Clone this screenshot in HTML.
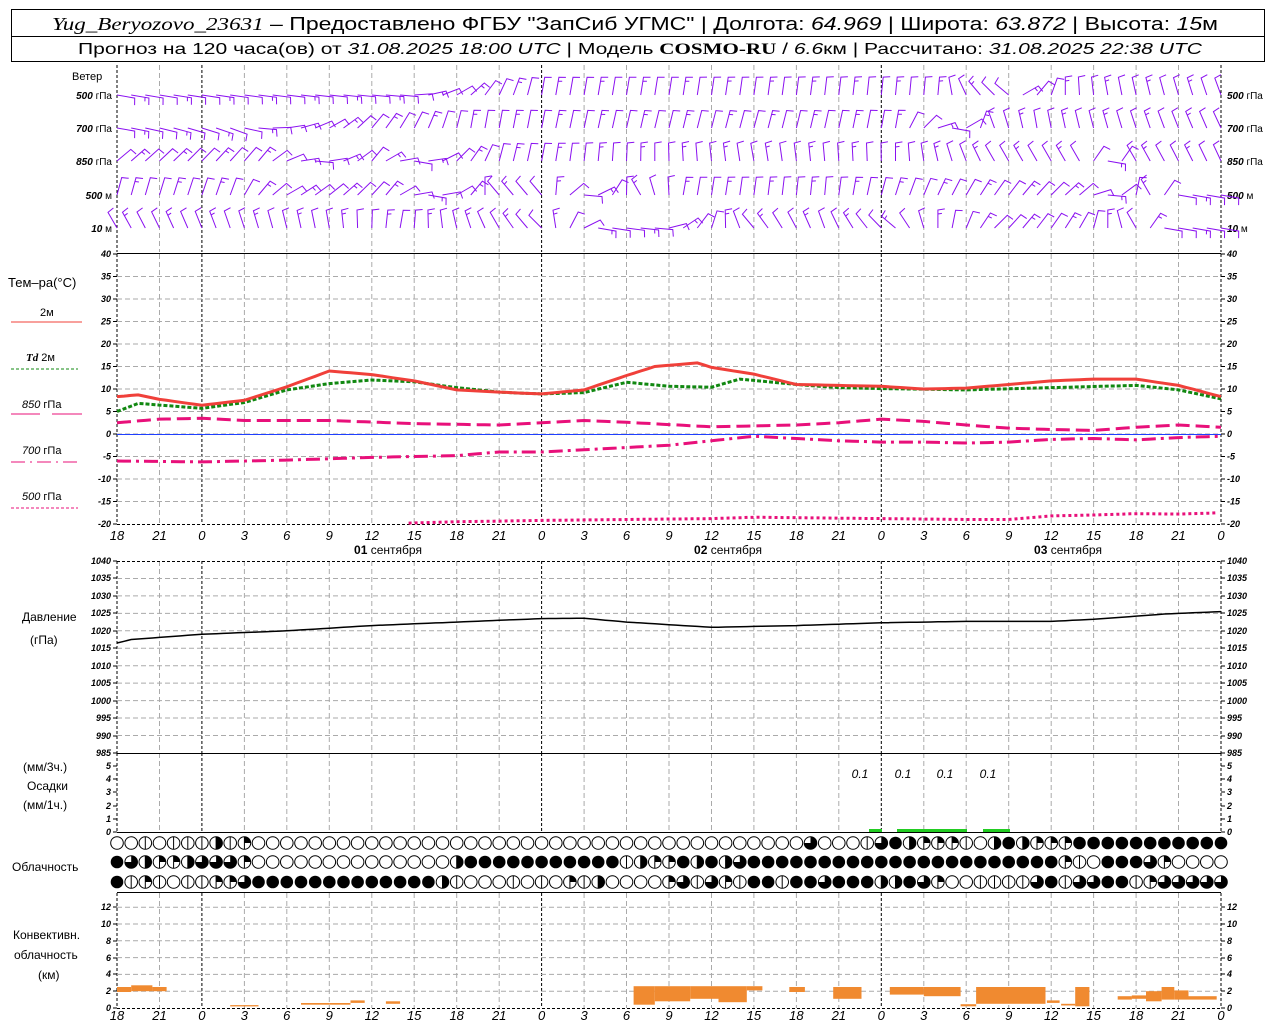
<!DOCTYPE html>
<html><head><meta charset="utf-8">
<style>
html,body{margin:0;padding:0;background:#fff;}
svg{display:block;font-family:"Liberation Sans","DejaVu Sans",sans-serif;}
</style></head>
<body>
<svg id="s" width="1280" height="1024" viewBox="0 0 1280 1024" xmlns="http://www.w3.org/2000/svg">
<rect width="1280" height="1024" fill="#fff"/>
<rect x="11.5" y="9.5" width="1253" height="52" fill="none" stroke="#000" stroke-width="1"/>
<line x1="11" y1="36.5" x2="1265" y2="36.5" stroke="#000"/>
<text x="52" y="30" font-size="18" textLength="1166" lengthAdjust="spacingAndGlyphs"><tspan font-style="italic" font-family="Liberation Serif,serif">Yug_Beryozovo_23631</tspan> – Предоставлено ФГБУ "ЗапСиб УГМС" | Долгота: <tspan font-style="italic">64.969</tspan> | Широта: <tspan font-style="italic">63.872</tspan> | Высота: <tspan font-style="italic">15</tspan>м</text>
<text x="78" y="54" font-size="16" textLength="1124" lengthAdjust="spacingAndGlyphs">Прогноз на 120 часа(ов) от <tspan font-style="italic">31.08.2025 18:00 UTC</tspan>  | Модель <tspan font-weight="bold" font-family="Liberation Serif,serif">COSMO-RU</tspan> / <tspan font-style="italic">6.6</tspan>км | Рассчитано: <tspan font-style="italic">31.08.2025 22:38 UTC</tspan></text>
<g font-size="11" fill="#000">
<text x="72" y="80">Ветер</text>
<text x="8" y="287" font-size="13">Тем–ра(°C)</text>
<text x="40" y="316">2м</text>
<text x="26" y="361"><tspan font-style="italic" font-weight="bold" font-family="Liberation Serif,serif">Td</tspan>  2м</text>
<text x="22" y="408"><tspan font-style="italic">850</tspan> гПа</text>
<text x="22" y="454"><tspan font-style="italic">700</tspan> гПа</text>
<text x="22" y="500"><tspan font-style="italic">500</tspan> гПа</text>
<text x="22" y="621" font-size="12">Давление</text>
<text x="30" y="644" font-size="12">(гПа)</text>
<text x="23" y="771" font-size="12">(мм/3ч.)</text>
<text x="27" y="790" font-size="12">Осадки</text>
<text x="23" y="809" font-size="12">(мм/1ч.)</text>
<text x="12" y="871" font-size="12">Облачность</text>
<text x="13" y="939" font-size="12">Конвективн.</text>
<text x="14" y="959" font-size="12">облачность</text>
<text x="38" y="979" font-size="12">(км)</text>
</g>
<line x1="11" y1="322" x2="82" y2="322" stroke="#f0403a" stroke-width="1"/>
<line x1="11" y1="369" x2="78" y2="369" stroke="#118811" stroke-dasharray="3,2"/>
<line x1="11" y1="414" x2="40" y2="414" stroke="#e8107a"/><line x1="52" y1="414" x2="82" y2="414" stroke="#e8107a"/>
<line x1="11" y1="462" x2="78" y2="462" stroke="#e8107a" stroke-dasharray="14,5,2,5"/>
<line x1="11" y1="508" x2="78" y2="508" stroke="#e8107a" stroke-dasharray="3,2"/>
<g id="dyn"></g>
</svg>
<script>
(function(){
var o='';
function X(h){return 117+h*14.1538;}
function Ty(t){return 434-t*4.5;}
function Py(p){return 561+(1040-p)*3.49;}
function Cy(k){return 1008-k*8.4;}
function interp(pts,h){for(var i=0;i<pts.length-1;i++){if(h>=pts[i][0]&&h<=pts[i+1][0]){var f=(h-pts[i][0])/(pts[i+1][0]-pts[i][0]);return pts[i][1]+f*(pts[i+1][1]-pts[i][1]);}}return pts[pts.length-1][1];}
function poly(pts,fy,attr){var s='',h0=pts[0][0],h1=pts[pts.length-1][0];for(var h=h0;h<=h1+0.001;h+=0.5){s+=X(h).toFixed(1)+','+fy(interp(pts,h)).toFixed(1)+' ';}o+='<polyline fill="none" points="'+s+'" '+attr+'/>';}
var panels=[[65,252],[254,524],[561,753],[753,832],[893,1008]];
panels.forEach(function(p){
 for(var i=0;i<=26;i++){var x=X(i*3);var day=(i%8==2)||i==0||i==26;
  o+='<line x1="'+x.toFixed(1)+'" y1="'+p[0]+'" x2="'+x.toFixed(1)+'" y2="'+p[1]+'" stroke="'+(day?'#000':'#aaa')+'" stroke-dasharray="'+(day?'3,2':'5,3')+'" stroke-width="1"/>';}
});
for(var t=-15;t<=35;t+=5){o+='<line x1="117" y1="'+Ty(t)+'" x2="1221" y2="'+Ty(t)+'" stroke="#aaa" stroke-dasharray="5,3"/>';}
for(var p=990;p<=1035;p+=5){o+='<line x1="117" y1="'+Py(p).toFixed(1)+'" x2="1221" y2="'+Py(p).toFixed(1)+'" stroke="#aaa" stroke-dasharray="5,3"/>';}
for(var k=2;k<=12;k+=2){o+='<line x1="117" y1="'+Cy(k).toFixed(1)+'" x2="1221" y2="'+Cy(k).toFixed(1)+'" stroke="#aaa" stroke-dasharray="5,3"/>';}
o+='<line x1="117" y1="253.5" x2="1221" y2="253.5" stroke="#000"/>';
o+='<line x1="117" y1="524.5" x2="1221" y2="524.5" stroke="#000" stroke-dasharray="3,2"/>';
o+='<line x1="117" y1="561.5" x2="1221" y2="561.5" stroke="#000" stroke-dasharray="3,2"/>';
o+='<line x1="117" y1="753.5" x2="1221" y2="753.5" stroke="#000"/>';
o+='<line x1="117" y1="832.5" x2="1221" y2="832.5" stroke="#000"/>';
o+='<line x1="117" y1="892.5" x2="1221" y2="892.5" stroke="#000"/>';
o+='<line x1="117" y1="1008.5" x2="1221" y2="1008.5" stroke="#000" stroke-dasharray="3,2"/>';
function lab(y,txt){o+='<text x="111" y="'+(y+3)+'" font-size="9" font-style="italic" font-weight="bold" text-anchor="end">'+txt+'</text><text x="1227" y="'+(y+3)+'" font-size="9" font-style="italic" font-weight="bold">'+txt+'</text>';
 o+='<line x1="113" y1="'+y+'" x2="117" y2="'+y+'" stroke="#000"/><line x1="1221" y1="'+y+'" x2="1225" y2="'+y+'" stroke="#000"/>';}
for(var t=-20;t<=40;t+=5)lab(Ty(t),t);
for(var p=985;p<=1040;p+=5)lab(Math.round(Py(p)),p);
for(var k=0;k<=5;k++)lab(Math.round(832-k*13.2),k);
for(var k=0;k<=12;k+=2)lab(Math.round(Cy(k)),k);
var wl=[['500 гПа',95],['700 гПа',128],['850 гПа',161],['500 м',195],['10  м',228]];
wl.forEach(function(w){var p=w[0].split(' ');o+='<text x="112" y="'+(w[1]+4)+'" font-size="10" text-anchor="end"><tspan font-style="italic" font-weight="bold">'+p[0]+'</tspan> '+w[0].substring(p[0].length+1)+'</text><text x="1227" y="'+(w[1]+4)+'" font-size="10"><tspan font-style="italic" font-weight="bold">'+p[0]+'</tspan> '+w[0].substring(p[0].length+1)+'</text>';});
var hrs=[18,21,0,3,6,9,12,15];
for(var i=0;i<=26;i++){var hl=hrs[i%8];var x=X(i*3);
 o+='<text x="'+x.toFixed(1)+'" y="540" font-size="13" font-style="italic" text-anchor="middle">'+hl+'</text>';
 o+='<text x="'+x.toFixed(1)+'" y="1020" font-size="13" font-style="italic" text-anchor="middle">'+hl+'</text>';}
['01','02','03'].forEach(function(d,i){o+='<text x="'+(388+i*340)+'" y="554" font-size="12" text-anchor="middle"><tspan font-weight="bold">'+d+'</tspan> сентября</text>';});
o+='<line x1="117" y1="434.5" x2="1221" y2="434.5" stroke="#2040ff" stroke-width="1"/>';
poly([[0,5],[1.5,6.8],[6,5.7],[9,7],[12,9.8],[15,11.2],[18,12],[21,11.6],[24,10.3],[27,9.3],[30,8.9],[33,9.2],[36,11.5],[39,10.6],[42,10.4],[44,12.2],[48,11],[51,10.3],[54,10.1],[60,9.8],[66,10.3],[72,10.8],[75,9.8],[78,7.8]],Ty,'stroke="#118811" stroke-width="3" stroke-dasharray="4,2"');
poly([[0,8.3],[1.5,8.7],[3,7.7],[6,6.4],[9,7.5],[12,10.5],[15,14.0],[18,13.2],[21,11.8],[24,9.8],[27,9.3],[30,8.9],[33,9.8],[36,13.0],[38,15.0],[41,15.8],[42,14.8],[45,13.3],[48,11],[51,10.8],[54,10.6],[57,10],[60,10.2],[63,11],[66,11.8],[69,12.2],[72,12.2],[75,10.8],[78,8.3]],Ty,'stroke="#f0403a" stroke-width="3"');
poly([[0,2.5],[3,3.3],[6,3.5],[9,3],[15,3],[21,2.3],[27,2],[33,3],[36,2.6],[42,1.6],[48,2],[51,2.5],[54,3.3],[57,2.8],[60,2],[63,1.3],[66,1],[69,0.8],[72,1.5],[75,2],[78,1.5]],Ty,'stroke="#e8107a" stroke-width="3" stroke-dasharray="14,6"');
poly([[0,-6],[6,-6.2],[12,-5.8],[18,-5.2],[24,-4.8],[27,-4],[30,-4],[33,-3.5],[36,-3],[39,-2.5],[42,-1.5],[45,-0.5],[48,-1],[51,-1.5],[54,-1.8],[57,-1.8],[60,-2],[63,-1.8],[66,-1.2],[69,-1],[72,-1.3],[75,-0.8],[78,-0.5]],Ty,'stroke="#e8107a" stroke-width="3" stroke-dasharray="14,5,3,5"');
poly([[20.6,-19.8],[24,-19.5],[30,-19.2],[36,-19],[42,-18.8],[45,-18.5],[48,-18.6],[54,-18.8],[60,-19],[63,-19],[66,-18.2],[69,-18],[72,-17.7],[75,-17.8],[78,-17.5]],Ty,'stroke="#e8107a" stroke-width="3" stroke-dasharray="3,3"');
poly([[0,1016.5],[1,1017.5],[6,1019],[12,1020],[18,1021.5],[24,1022.5],[30,1023.5],[33,1023.6],[36,1022.5],[42,1021],[48,1021.5],[54,1022.3],[60,1022.7],[66,1022.7],[69,1023.3],[74,1024.8],[78,1025.5]],Py,'stroke="#000" stroke-width="1.5"');
[[869,882],[897,967],[983,1010]].forEach(function(b){o+='<rect x="'+b[0]+'" y="829" width="'+(b[1]-b[0])+'" height="3" fill="#22cc22"/>';});
[860,903,945,988].forEach(function(x){o+='<text x="'+x+'" y="778" font-size="12" font-style="italic" text-anchor="middle">0.1</text>';});
var cb=[[0,1,1.9,2.5],[1,2.5,2.0,2.7],[2.5,3.5,2.0,2.5],[8,10,0.2,0.35],[13,15,0.4,0.6],[15,16.5,0.4,0.6],[16.5,17.5,0.6,0.9],[19,20,0.5,0.8],
[36.5,38,0.4,2.6],[38,40.5,0.8,2.6],[40.5,42.5,1.1,2.6],[42.5,44.5,0.7,2.6],[44.5,45.6,2.1,2.6],[47.5,48.6,1.9,2.5],[50.6,52.6,1.1,2.5],
[54.6,57,1.6,2.5],[57,59.6,1.4,2.5],[59.6,60.7,0.2,0.45],[60.7,65.6,0.5,2.5],[65.7,66.6,0.6,0.9],[66.7,67.7,0.3,0.5],[67.7,68.7,0.2,2.5],
[70.7,71.7,1.0,1.4],[71.7,72.7,1.1,1.5],[72.7,73.8,0.8,2.0],[73.8,74.7,1.0,2.5],[74.7,75.7,1.0,2.1],[75.7,77.7,1.0,1.4]];
cb.forEach(function(b){o+='<rect x="'+X(b[0]).toFixed(1)+'" y="'+Cy(b[3]).toFixed(1)+'" width="'+(X(b[1])-X(b[0])).toFixed(1)+'" height="'+((b[3]-b[2])*8.4).toFixed(1)+'" fill="#f08a30"/>';});
function pad(s,c){while(s.length<79)s+=c;return s.substring(0,79);}
var rows=[
 pad("oovovvvhvq"+Array(40).join('o')+"tooovtfhqqqvohfhqqq",'f').split(''),
 pad("fthqqhtttq"+Array(15).join('o')+"hfffffffffffvhqqfhfhtffffffffffffffffffffffqvoffftqoo",'o').split(''),
 pad("fvqvovvqqtfffffffffffffhvooovovoqvhooooqtvtqvffvfftfffhhftqoovvvvtfvttffvq",'t').split('')];
var cys=[843,862,882];
rows.forEach(function(r,ri){r.forEach(function(c,i){var cx=X(i).toFixed(1),cy=cys[ri],R=6.3;
 if(c=='f'){o+='<circle cx="'+cx+'" cy="'+cy+'" r="'+R+'" fill="#000"/>';return;}
 o+='<circle cx="'+cx+'" cy="'+cy+'" r="'+R+'" fill="#fff" stroke="#000" stroke-width="1"/>';
 var x=+cx;
 if(c=='h')o+='<path d="M'+x+','+(cy-R)+' A'+R+','+R+' 0 0 1 '+x+','+(cy+R)+' Z" fill="#000"/>';
 if(c=='q')o+='<path d="M'+x+','+cy+' L'+x+','+(cy-R)+' A'+R+','+R+' 0 0 1 '+(x+R)+','+cy+' Z" fill="#000"/>';
 if(c=='t')o+='<path d="M'+x+','+cy+' L'+x+','+(cy-R)+' A'+R+','+R+' 0 1 1 '+(x-R)+','+cy+' Z" fill="#000"/>';
 if(c=='v'||c=='q'||c=='h')o+='<line x1="'+x+'" y1="'+(cy-R)+'" x2="'+x+'" y2="'+(cy+R)+'" stroke="#000"/>';
});});
var wk=[
 [95,[[0,100],[20,95],[24,60],[27,25],[30,10],[45,8],[58,5],[61,-40],[63,-50],[64,60],[67,0],[70,-10],[78,-20]]],
 [128,[[0,100],[8,110],[10,95],[18,40],[25,10],[45,15],[55,10],[57,45],[59,100],[62,-20],[65,-10],[78,-25]]],
 [161,[[0,50],[10,40],[14,95],[18,40],[21,100],[24,45],[27,15],[45,-10],[55,0],[62,-30],[68,-30],[70,100],[72,-30],[78,-25]]],
 [195,[[0,15],[8,20],[12,60],[19,40],[22,100],[25,40],[27,-40],[30,-40],[33,95],[37,-30],[40,10],[50,5],[60,30],[68,50],[70,95],[73,-30],[75,100],[78,100]]],
 [228,[[0,-30],[15,-10],[20,10],[27,-30],[30,-45],[34,100],[38,95],[45,-40],[50,-20],[55,-50],[58,0],[62,45],[68,30],[72,-30],[74,100],[78,100]]]];
wk.forEach(function(w){var yb=w[0];for(var i=0;i<=78;i++){
 var th=interp(w[1],i)*Math.PI/180,L=18,x=X(i),y=yb;
 var tx=x+L*Math.sin(th),ty=y-L*Math.cos(th);
 var ph=th+Math.PI/2*0.9;
 var s='M'+x.toFixed(1)+','+y+' L'+tx.toFixed(1)+','+ty.toFixed(1)+' l'+(7*Math.sin(ph)).toFixed(1)+','+(-7*Math.cos(ph)).toFixed(1);
 if(i%3==1){var mx=x+(L-4)*Math.sin(th),my=y-(L-4)*Math.cos(th);s+=' M'+mx.toFixed(1)+','+my.toFixed(1)+' l'+(4*Math.sin(ph)).toFixed(1)+','+(-4*Math.cos(ph)).toFixed(1);}
 o+='<path d="'+s+'" fill="none" stroke="#8a10f0" stroke-width="1"/>';
}});
document.getElementById('dyn').innerHTML=o;
})();
</script>
</body></html>
